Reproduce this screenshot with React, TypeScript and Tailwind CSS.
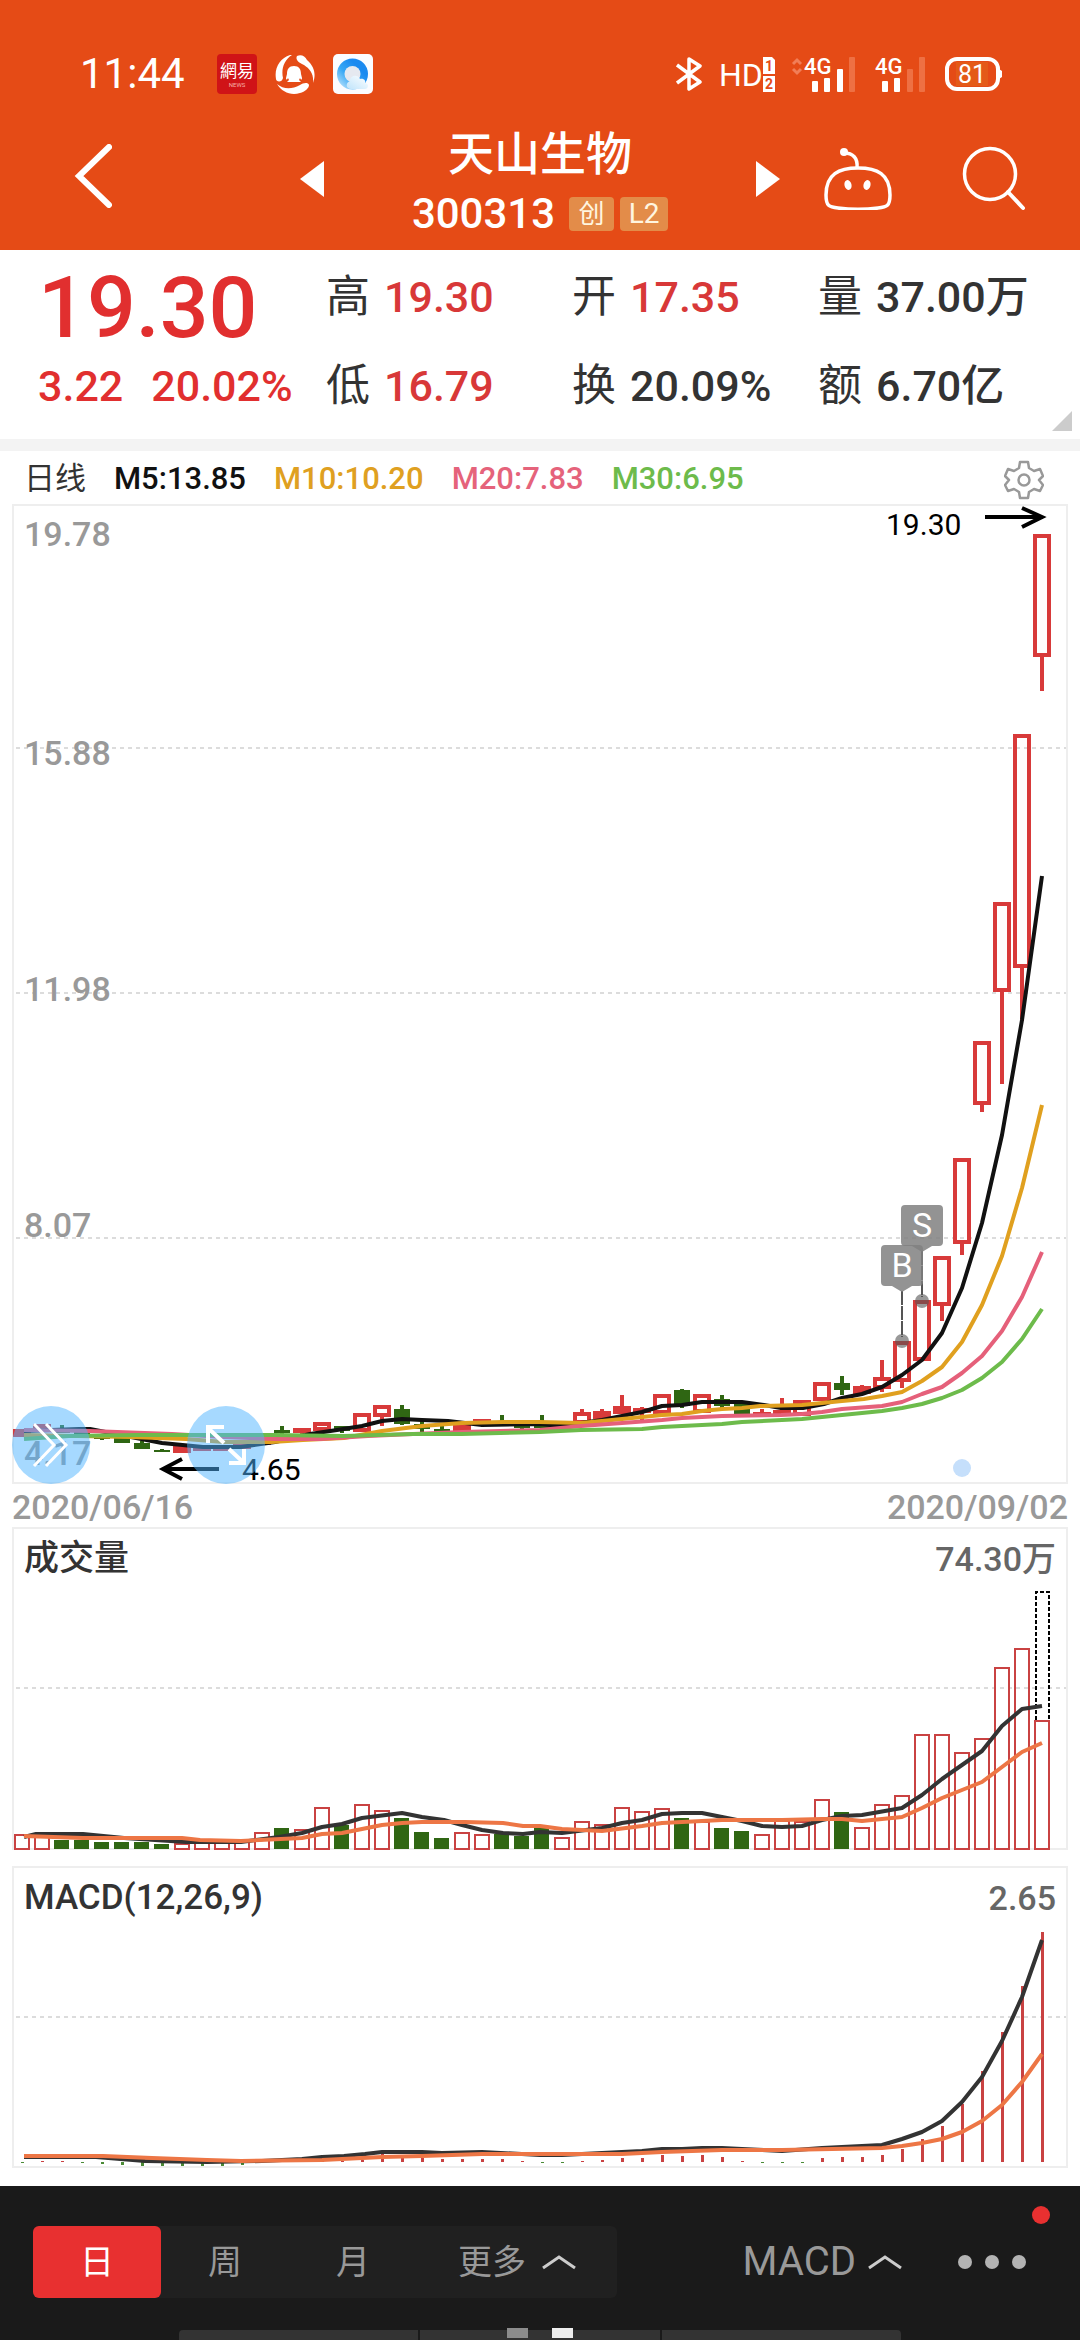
import type { ReactNode } from "react";
import clsx from "clsx";

type Candle = {
  up: boolean;
  high: number;
  top: number;
  bottom: number;
  low: number;
};

const RED = "#d83a3a";
const GREEN = "#2f6613";

// All panels share one x axis, a candle every 20 units
const xAt = (i: number) => 22 + i * 20;

const u = (high: number, top: number, bottom: number, low: number): Candle => ({
  up: true,
  high,
  top,
  bottom,
  low,
});
const d = (high: number, top: number, bottom: number, low: number): Candle => ({
  up: false,
  high,
  top,
  bottom,
  low,
});

const candles: Candle[] = [
  u(1429, 1429, 1437, 1437),
  u(1424, 1424, 1432, 1432),
  d(1425, 1430, 1433, 1433),
  d(1431, 1432, 1435, 1435),
  d(1436, 1437, 1439, 1440),
  d(1437, 1437, 1443, 1443),
  d(1441, 1443, 1449, 1449),
  d(1449, 1450, 1452, 1452),
  u(1446, 1446, 1453, 1453),
  u(1446, 1446, 1449, 1451),
  u(1445, 1446, 1451, 1451),
  u(1443, 1444, 1448, 1448),
  u(1433, 1433, 1445, 1445),
  d(1426, 1430, 1433, 1434),
  u(1428, 1428, 1432, 1434),
  u(1422, 1422, 1431, 1431),
  d(1426, 1426, 1431, 1433),
  u(1413, 1413, 1432, 1432),
  u(1405, 1405, 1417, 1426),
  d(1405, 1409, 1424, 1425),
  d(1421, 1424, 1429, 1432),
  d(1426, 1429, 1432, 1432),
  u(1425, 1425, 1431, 1433),
  u(1419, 1419, 1423, 1423),
  d(1415, 1421, 1426, 1426),
  d(1424, 1426, 1428, 1434),
  d(1415, 1424, 1428, 1428),
  u(1421, 1422, 1427, 1427),
  u(1409, 1412, 1424, 1424),
  u(1409, 1411, 1419, 1419),
  u(1395, 1406, 1414, 1414),
  u(1407, 1408, 1413, 1420),
  u(1394, 1394, 1414, 1414),
  d(1389, 1390, 1406, 1408),
  u(1394, 1394, 1413, 1413),
  d(1395, 1399, 1406, 1408),
  d(1402, 1402, 1414, 1417),
  u(1409, 1412, 1416, 1416),
  u(1398, 1410, 1416, 1416),
  u(1400, 1400, 1416, 1416),
  u(1382, 1382, 1401, 1401),
  d(1376, 1383, 1390, 1395),
  u(1385, 1386, 1394, 1394),
  u(1360, 1377, 1389, 1392),
  u(1341, 1341, 1382, 1388),
  u(1300, 1300, 1361, 1361),
  u(1256, 1256, 1306, 1321),
  u(1158, 1158, 1244, 1255),
  u(1041, 1041, 1105, 1112),
  u(902, 902, 992, 1084),
  u(734, 734, 968, 1021),
  u(534, 534, 657, 691),
];

const priceLines = [
  {
    stroke: "#111111",
    points:
      "24,1431 79,1429 90,1429 131,1437 162,1443 203,1447 241,1447 275,1442 310,1434 337,1430 362,1426 382,1421 402,1419 422,1420 448,1421 482,1425 540,1424 561,1426 581,1423 602,1420 622,1416 642,1412 662,1406 682,1405 702,1402 742,1402 764,1405 781,1408 803,1408 824,1404 842,1398 862,1394 882,1387 902,1375 922,1360 942,1333 962,1288 982,1223 1002,1135 1022,1020 1042,876",
  },
  {
    stroke: "#e0a01f",
    points:
      "24,1435 131,1437 186,1439 224,1442 272,1442 303,1440 344,1438 382,1431 422,1426 462,1423 503,1422 540,1422 581,1423 622,1419 662,1415 682,1414 702,1411 722,1409 742,1408 760,1406 802,1405 822,1403 842,1401 864,1399 882,1396 902,1392 922,1381 942,1367 962,1342 982,1305 1002,1256 1022,1188 1042,1105",
  },
  {
    stroke: "#e5607a",
    points:
      "24,1430 90,1431 172,1434 224,1437 275,1439 320,1439 368,1436 413,1434 462,1432 540,1430 581,1426 622,1423 662,1420 682,1418 722,1416 781,1415 802,1414 822,1412 842,1409 882,1406 902,1402 922,1394 942,1387 962,1373 982,1356 1002,1331 1022,1297 1042,1252",
  },
  {
    stroke: "#6dbb4b",
    points:
      "24,1439 69,1436 138,1435 275,1435 344,1436 413,1434 462,1434 540,1432 581,1430 642,1429 662,1427 722,1424 742,1422 802,1419 842,1415 882,1411 902,1408 922,1404 942,1398 962,1390 982,1378 1002,1362 1022,1339 1042,1309",
  },
];

const axisLabels = [
  { text: "19.78", y: 546 },
  { text: "15.88", y: 765 },
  { text: "11.98", y: 1001 },
  { text: "8.07", y: 1237 },
  { text: "4.17", y: 1465 },
];

const volumeTops = [
  1834, 1833, 1840, 1840, 1842, 1842, 1842, 1844, 1843, 1842, 1842, 1841, 1832,
  1828, 1829, 1807, 1825, 1804, 1810, 1818, 1832, 1838, 1832, 1834, 1834, 1836,
  1827, 1837, 1821, 1824, 1807, 1811, 1808, 1818, 1821, 1828, 1831, 1834, 1820,
  1821, 1799, 1812, 1827, 1804, 1795, 1734, 1734, 1752, 1738, 1667, 1648, 1720,
];

const volumeLines = [
  {
    stroke: "#333333",
    points:
      "24,1837 36,1834 83,1834 124,1838 186,1842 241,1842 279,1837 302,1833 322,1827 342,1824 362,1818 402,1813 422,1817 444,1820 462,1825 482,1830 503,1833 523,1834 540,1832 562,1833 602,1828 622,1823 642,1820 662,1814 682,1813 702,1813 722,1817 742,1821 762,1826 782,1827 802,1826 822,1820 842,1816 862,1815 902,1808 922,1795 942,1779 962,1765 982,1751 1002,1726 1022,1709 1042,1706",
  },
  {
    stroke: "#ed7645",
    points:
      "24,1836 83,1838 182,1838 200,1840 241,1841 302,1838 322,1834 342,1833 382,1825 402,1823 422,1822 465,1822 503,1823 523,1826 540,1826 562,1829 602,1831 642,1826 662,1823 722,1820 782,1820 822,1819 842,1819 862,1821 902,1817 922,1808 942,1798 962,1790 982,1782 1002,1767 1022,1752 1042,1743",
  },
];

// Histogram heights around the zero line
const macdBars = [
  -1, 1, 1, -1, -2, -3, -4, -4, -4, -4, -4, -3, 0, 0, 0, 1, 1, 2, 8, 4, 4, 3, 3,
  3, 3, 1, -1, -1, 1, 2, 4, 4, 7, 6, 7, 5, 1, -1, -1, -1, 4, 5, 5, 7, 13, 23, 36,
  58, 91, 130, 176, 230,
];

const macdLines = [
  {
    stroke: "#333333",
    points:
      "24,2157 96,2157 145,2161 207,2162 262,2161 302,2159 322,2157 344,2156 365,2154 382,2152 402,2152 422,2152 442,2153 482,2152 540,2155 562,2155 602,2153 642,2151 662,2149 682,2149 702,2148 722,2148 742,2149 782,2151 822,2148 882,2145 902,2139 922,2132 942,2121 962,2102 982,2077 1002,2041 1022,1997 1042,1940",
  },
  {
    stroke: "#ed7645",
    points:
      "24,2156 103,2156 152,2158 207,2160 241,2161 322,2160 382,2157 422,2156 482,2154 540,2154 622,2154 662,2152 722,2150 782,2150 882,2148 902,2146 922,2143 942,2139 962,2132 982,2121 1002,2105 1022,2082 1042,2054",
  },
];

const quotes = [
  { label: "高", value: "19.30", red: true },
  { label: "开", value: "17.35", red: true },
  { label: "量", value: "37.00万", red: false },
  { label: "低", value: "16.79", red: true },
  { label: "换", value: "20.09%", red: false },
  { label: "额", value: "6.70亿", red: false },
];

function Lines({ lines }: { lines: { stroke: string; points: string }[] }) {
  return (
    <g fill="none" strokeWidth="4" strokeLinejoin="round">
      {lines.map((line) => (
        <polyline key={line.stroke} points={line.points} stroke={line.stroke} />
      ))}
    </g>
  );
}

function GridLine({ y }: { y: number }) {
  return (
    <line x1="16" x2="1066" y1={y} y2={y} stroke="#dcdcdc" strokeWidth="2" strokeDasharray="4 4" />
  );
}

function StatusBar() {
  return (
    <div className="flex h-10 items-center justify-between pr-[78px] pl-20">
      <div className="flex items-center">
        <span className="mr-8 text-[42px] leading-10">11:44</span>
        <div className="flex gap-[18px]">
          <svg className="size-10" viewBox="0 0 40 40">
            <rect width="40" height="40" rx="4" fill="#d01317" />
            <text x="20" y="23" fontSize="17" fill="#fff" textAnchor="middle">
              網易
            </text>
            <text x="20" y="33" fontSize="6" fill="#f6b0a8" textAnchor="middle">
              NEWS
            </text>
          </svg>
          <svg className="size-10" viewBox="0 0 40 40" fill="#fff">
            <path d="M15 1C5 4-1 14 1 25c0 3 6 4 7-1C6 15 9 6 17 1z" />
            <path d="M22 2c4-2 8 0 10 4 8 7 9 15 6 23 1-9-3-14-9-18-5-2-9-5-7-9z" />
            <path d="M2 30c6 5 14 6 23 1 3-2 8-3 9 0 0 3-4 7-9 8C16 42 7 38 2 30z" />
            <path d="M19 12c-5 0-7 3-7 8l-1 4c0 2 1 2 2 0l1 2-2 2h14l-2-2 1-2c1 2 2 2 2 0l-1-4c0-5-2-8-7-8z" />
          </svg>
          <svg className="size-10" viewBox="0 0 40 40">
            <defs>
              <linearGradient id="browserRing" x1="1" y1="0" x2="0" y2="1">
                <stop offset="0.3" stopColor="#1b8af0" />
                <stop offset="0.6" stopColor="#38a8f5" />
                <stop offset="1" stopColor="#d8f0fd" />
              </linearGradient>
              <linearGradient id="browserCloud" x1="0" y1="1" x2="1" y2="0">
                <stop offset="0" stopColor="#bfe4fb" />
                <stop offset="1" stopColor="#ffffff" />
              </linearGradient>
            </defs>
            <rect width="40" height="40" rx="5" fill="#fbfcff" />
            <circle cx="19.500" cy="20" r="15.500" fill="url(#browserRing)" />
            <circle cx="19.500" cy="20" r="8" fill="#e6e9f0" />
            <path
              d="M18 35c-5 0-6-6-1-8 0-6 8-7 10-2 4-1 6 2 5 4 5 1 3 6 0 6z"
              fill="url(#browserCloud)"
            />
          </svg>
        </div>
      </div>
      <div className="flex items-center">
        <svg className="h-9 w-[26px]" viewBox="0 0 26 36" fill="none" stroke="#fff" strokeWidth="3.500">
          <path d="M1 9l23 17-11 7V3l11 7L1 27" strokeLinejoin="round" />
        </svg>
        <svg className="ml-[18px] h-9 w-14 overflow-visible" viewBox="0 0 56 36">
          <text x="-1" y="30" fontSize="32" fill="#fff">
            HD
          </text>
          <path d="M43 1h9l3 3v14H43z" fill="#fff" />
          <rect x="43" y="20" width="12" height="16" fill="#fff" />
          <text x="49" y="15" fontSize="14" fontWeight="700" fill="#e54b16" textAnchor="middle">
            1
          </text>
          <text x="49" y="33" fontSize="14" fontWeight="700" fill="#e54b16" textAnchor="middle">
            2
          </text>
        </svg>
        <svg className="ml-4 h-9 w-[63px] overflow-visible" viewBox="0 0 63 36" fill="#fff">
          <path d="M1 8l4-4 4 4M1 13l4 4 4-4" fill="none" stroke="#f17e57" strokeWidth="3" />
          <text x="12" y="18" fontSize="22" fontWeight="500">
            4G
          </text>
          <rect x="20" y="25" width="6" height="11" rx="1" />
          <rect x="32" y="22" width="6" height="14" rx="1" />
          <rect x="45" y="13" width="6" height="23" rx="1" />
          <rect x="57" y="1" width="6" height="35" rx="1" fill="#ee7043" />
        </svg>
        <svg className="ml-5 h-9 w-[50px] overflow-visible" viewBox="0 0 50 36" fill="#fff">
          <text x="0" y="18" fontSize="22" fontWeight="500">
            4G
          </text>
          <rect x="7" y="25" width="6" height="11" rx="1" />
          <rect x="19" y="22" width="6" height="14" rx="1" />
          <rect x="32" y="13" width="6" height="23" rx="1" fill="#ee7043" />
          <rect x="44" y="1" width="6" height="35" rx="1" fill="#ee7043" />
        </svg>
        <svg className="ml-5 h-9 w-[57px]" viewBox="0 0 57 36" fill="#fff">
          <rect x="11" y="6" width="32" height="24" fill="#e45a18" />
          <rect x="2" y="3" width="51" height="30" rx="10" fill="none" stroke="#fff" strokeWidth="4" />
          <path d="M54 13l3 2v6l-3 2z" />
          <text x="27" y="27" fontSize="25" textAnchor="middle">
            81
          </text>
        </svg>
      </div>
    </div>
  );
}

function Header() {
  return (
    <header className="bg-[#e54b16] pt-[54px] text-white">
      <StatusBar />
      <nav className="grid h-[156px] grid-cols-[1fr_480px_1fr] pt-[30px]">
        <button className="h-[104px] pl-[74px]" aria-label="返回">
          <svg className="h-16 w-[38px]" viewBox="0 0 38 64" fill="none">
            <path d="M35 3L5 32l30 29" stroke="#fff" strokeWidth="6" strokeLinecap="round" />
          </svg>
        </button>
        <div className="flex h-[110px] items-center justify-between">
          <button aria-label="上一只">
            <svg className="h-9 w-6" viewBox="0 0 24 36" fill="#fff">
              <path d="M24 0v36L0 18z" />
            </svg>
          </button>
          <div className="flex flex-col items-center pt-2.5">
            <h1 className="text-[46px] leading-[60px] font-medium">天山生物</h1>
            <div className="flex items-center gap-1.5">
              <span className="mr-2 text-[42px] leading-[60px] font-medium">300313</span>
              <span className="w-[45px] rounded-sm bg-[#e38c49] text-center text-[26px] leading-[34px] text-[#fff6e0]">
                创
              </span>
              <span className="w-12 rounded-sm bg-[#e38c49] text-center text-[28px] leading-[34px] text-[#fff6e0]">
                L2
              </span>
            </div>
          </div>
          <button aria-label="下一只">
            <svg className="h-9 w-6" viewBox="0 0 24 36" fill="#fff">
              <path d="M0 0v36l24-18z" />
            </svg>
          </button>
        </div>
        <div className="flex h-[110px] items-center justify-between pr-[54px] pl-11">
          <button aria-label="智能助手">
            <svg className="h-[62px] w-[68px]" viewBox="0 0 68 62" fill="none" stroke="#fff" strokeWidth="3.500">
              <path d="M34 20c19 0 32 6 32 27 0 11-3 12-12 13a160 160 0 0 1-40 0C5 59 2 58 2 47c0-21 13-27 32-27z" />
              <path d="M20 5c9 0 14 5 13 15" />
              <circle cx="20" cy="4" r="4" fill="#fff" stroke="none" />
              <ellipse cx="24" cy="37" rx="3.500" ry="5" fill="#fff" stroke="none" transform="rotate(-15 24 37)" />
              <ellipse cx="43" cy="37" rx="3.500" ry="5" fill="#fff" stroke="none" transform="rotate(15 43 37)" />
            </svg>
          </button>
          <button aria-label="搜索">
            <svg className="h-[66px] w-16" viewBox="0 0 64 66" fill="none" stroke="#fff" strokeWidth="3.500">
              <circle cx="28" cy="28" r="25.500" />
              <path d="M46 46l15 16" strokeWidth="4" strokeLinecap="round" />
            </svg>
          </button>
        </div>
      </nav>
    </header>
  );
}

function Quote() {
  return (
    <section className="relative flex h-[189px]">
      <div className="w-[326px] shrink-0 pt-2.5 pl-[38px] text-[#e12f2f]">
        <p className="text-[86px] leading-[96px] font-medium">19.30</p>
        <p className="flex gap-7 text-[43px] leading-[60px] font-medium">
          <span>3.22</span>
          <span>20.02%</span>
        </p>
      </div>
      <dl className="grid flex-1 auto-rows-[89px] grid-cols-[246px_246px_1fr] pt-0.5">
        {quotes.map((q) => (
          <div key={q.label} className="flex items-center gap-3.5 whitespace-nowrap">
            <dt className="text-[44px] leading-[60px] text-[#333]">{q.label}</dt>
            <dd
              className={clsx(
                "text-[43px] leading-[60px] font-medium",
                q.red ? "text-[#d83838]" : "text-[#333]"
              )}
            >
              {q.value}
            </dd>
          </div>
        ))}
      </dl>
      <svg className="absolute right-2 bottom-2 size-5" viewBox="0 0 20 20">
        <path d="M20 0v20H0z" fill="#ccc" />
      </svg>
    </section>
  );
}

function MovingAverages() {
  return (
    <div className="flex h-[53px] items-center gap-7 pt-1 pr-9 pl-6 text-[31px] font-medium">
      <span className="font-normal text-[#333]">日线</span>
      <span className="text-[#111]">M5:13.85</span>
      <span className="text-[#dfa021]">M10:10.20</span>
      <span className="text-[#e5637b]">M20:7.83</span>
      <span className="text-[#6dbb4b]">M30:6.95</span>
      <button className="ml-auto" aria-label="设置">
        <svg className="size-10" viewBox="0 0 40 40" fill="none" stroke="#999" strokeWidth="2.500">
          <path
            d="M16 2h8l1 6 5 3 6-2 3 7-4 4 4 5-3 6-6-2-5 3-1 6h-8l-1-6-5-3-6 2-3-6 4-5-4-4 3-7 6 2 5-3z"
            strokeLinejoin="round"
          />
          <circle cx="20" cy="20" r="5.500" />
        </svg>
      </button>
    </div>
  );
}

function Marker({ label, x, y }: { label: string; x: number; y: number }) {
  return (
    <g>
      <line x1={x} x2={x} y1={y + 46} y2={y + 92} stroke="#555" strokeWidth="2" strokeDasharray="14 1" />
      <circle cx={x} cy={y + 96} r="7" fill="#555" fillOpacity="0.6" />
      <path
        d={`M${x - 17} ${y}h34q4 0 4 4v33q0 4-4 4h-7l-10 6-10-6h-7q-4 0-4-4v-33q0-4 4-4z`}
        fill="#808080"
        fillOpacity="0.85"
      />
      <text x={x} y={y + 32} fontSize="34" fill="#fff" textAnchor="middle">
        {label}
      </text>
    </g>
  );
}

function PriceChart() {
  return (
    <div className="relative mx-3 border-2 border-[#eee]">
      <svg className="block w-full overflow-visible" viewBox="14 506 1052 976">
        <GridLine y={748} />
        <GridLine y={993} />
        <GridLine y={1238} />
        <g fontSize="34" fontWeight="500" fill="#999">
          {axisLabels.map((label) => (
            <text key={label.text} x="24" y={label.y}>
              {label.text}
            </text>
          ))}
        </g>
        {candles.map((c, i) => {
          const x = xAt(i);
          if (!c.up) {
            return (
              <g key={i} fill={GREEN}>
                <rect x={x - 2} y={c.high} width="4" height={c.low - c.high} />
                <rect x={x - 8} y={c.top} width="16" height={c.bottom - c.top} />
              </g>
            );
          }
          return (
            <g key={i} fill={RED}>
              <rect x={x - 2} y={c.high} width="4" height={c.top - c.high} />
              <rect x={x - 2} y={c.bottom} width="4" height={c.low - c.bottom} />
              <rect
                x={x - 7}
                y={c.top + 2}
                width="14"
                height={Math.max(c.bottom - c.top - 4, 1)}
                fill="none"
                stroke={RED}
                strokeWidth="4"
              />
            </g>
          );
        })}
        <Lines lines={priceLines} />
        <Marker label="S" x={922} y={1205} />
        <Marker label="B" x={902} y={1245} />
        <circle cx="962" cy="1468" r="9" fill="#c5dffb" />
        <g fill="none" stroke="#000" strokeWidth="4">
          <path d="M985 517h56M1022 508l20 9-20 10" />
          <path d="M219 1469h-56M182 1459l-19 10 19 10" />
        </g>
        <g fontSize="30">
          <text x="886" y="535">
            19.30
          </text>
          <text x="242" y="1480">
            4.65
          </text>
        </g>
      </svg>
      <RoundButton className="-left-0.5" label="展开">
        <path d="M22 18l20 21-20 21M34 18l20 21-20 21" />
      </RoundButton>
      <RoundButton className="left-[173px]" label="全屏">
        <path d="M37 37L21 22M37 21H21v16M42 43l15 14M42 57h15V43" strokeWidth="4" />
      </RoundButton>
    </div>
  );
}

function RoundButton({
  className,
  label,
  children,
}: {
  className: string;
  label: string;
  children: ReactNode;
}) {
  return (
    <button
      className={clsx("absolute -bottom-0.5 size-[78px] rounded-full bg-[#4db3ff]/50", className)}
      aria-label={label}
    >
      <svg viewBox="0 0 78 78" fill="none" stroke="#fff" strokeWidth="3">
        {children}
      </svg>
    </button>
  );
}

function PanelTitle({ title, value }: { title: string; value: string }) {
  return (
    <div className="flex h-[60px] items-center justify-between px-2.5 font-medium">
      <h2 className="text-[35px] text-[#333]">{title}</h2>
      <span className="text-[34px] text-[#666]">{value}</span>
    </div>
  );
}

function VolumeChart() {
  return (
    <div className="mx-3 border-2 border-[#eee]">
      <PanelTitle title="成交量" value="74.30万" />
      <svg className="block w-full overflow-visible" viewBox="14 1589 1052 259">
        <GridLine y={1688} />
        {volumeTops.map((top, i) =>
          candles[i].up ? (
            <rect
              key={i}
              x={xAt(i) - 7}
              y={top + 1}
              width="14"
              height={1848 - top}
              fill="none"
              stroke="#c94242"
              strokeWidth="2"
            />
          ) : (
            <rect key={i} x={xAt(i) - 8} y={top} width="15" height={1849 - top} fill={GREEN} />
          )
        )}
        {/* estimated full-day volume */}
        <path
          d="M1036 1720V1592h13v128"
          fill="none"
          stroke="#000"
          strokeWidth="2"
          strokeDasharray="4 2"
        />
        <Lines lines={volumeLines} />
      </svg>
    </div>
  );
}

function MacdChart() {
  return (
    <div className="mx-3 mt-4 border-2 border-[#eee]">
      <PanelTitle title="MACD(12,26,9)" value="2.65" />
      <svg className="block w-full overflow-visible" viewBox="14 1928 1052 238">
        <GridLine y={2017} />
        {macdBars.map((v, i) => (
          <rect
            key={i}
            x={xAt(i) - 1}
            y={v > 0 ? 2162 - v : 2162}
            width="3"
            height={Math.abs(v)}
            fill={v > 0 ? "#c94242" : "#4a8a35"}
          />
        ))}
        <Lines lines={macdLines} />
      </svg>
    </div>
  );
}

function Caret() {
  return (
    <svg className="h-4 w-[34px]" viewBox="0 0 34 16" fill="none" stroke="#ccc" strokeWidth="3">
      <path d="M1 14L17 3l16 11" />
    </svg>
  );
}

function Toolbar() {
  return (
    <footer className="bg-[#1a1a1a] text-[34px] text-[#999]">
      <div className="flex h-36 items-center pt-2 pr-[54px] pl-[33px]">
        <div className="flex h-[72px] rounded-md bg-[#202020]">
          <button className="w-32 rounded-md bg-[#e83030] text-white">日</button>
          <button className="w-32">周</button>
          <button className="w-32">月</button>
          <button className="flex w-[200px] items-center justify-center gap-4">
            更多
            <Caret />
          </button>
        </div>
        <button className="ml-auto flex items-center gap-3 text-[40px]">
          MACD
          <Caret />
        </button>
        <button className="relative ml-14 flex h-[72px] items-center gap-[13px]" aria-label="更多功能">
          <span className="size-3.5 rounded-full bg-[#b3b3b3]" />
          <span className="size-3.5 rounded-full bg-[#b3b3b3]" />
          <span className="size-3.5 rounded-full bg-[#b3b3b3]" />
          <span className="absolute -top-5 -right-6 size-[18px] rounded-full bg-[#e83030]" />
        </button>
      </div>
      <div className="relative mx-auto flex h-2.5 w-[722px] gap-0.5">
        <span className="flex-1 rounded-tl bg-[#333]" />
        <span className="flex-1 bg-[#333]" />
        <span className="flex-1 rounded-tr bg-[#333]" />
        <div className="absolute inset-x-0 -top-0.5 flex justify-center gap-6">
          <span className="h-2.5 w-[21px] bg-[#8c8c8c]" />
          <span className="h-2.5 w-[21px] bg-[#eee]" />
        </div>
      </div>
    </footer>
  );
}

export default function App() {
  return (
    <main className="bg-white font-['Roboto','Noto_Sans_CJK_SC',sans-serif]">
      <Header />
      <Quote />
      <div className="h-3 bg-[#f3f3f3]" />
      <MovingAverages />
      <PriceChart />
      <div className="mx-3 flex h-[43px] items-center justify-between pt-1 text-[34px] font-medium text-[#999]">
        <time>2020/06/16</time>
        <time>2020/09/02</time>
      </div>
      <VolumeChart />
      <MacdChart />
      <div className="mt-[18px]">
        <Toolbar />
      </div>
    </main>
  );
}
